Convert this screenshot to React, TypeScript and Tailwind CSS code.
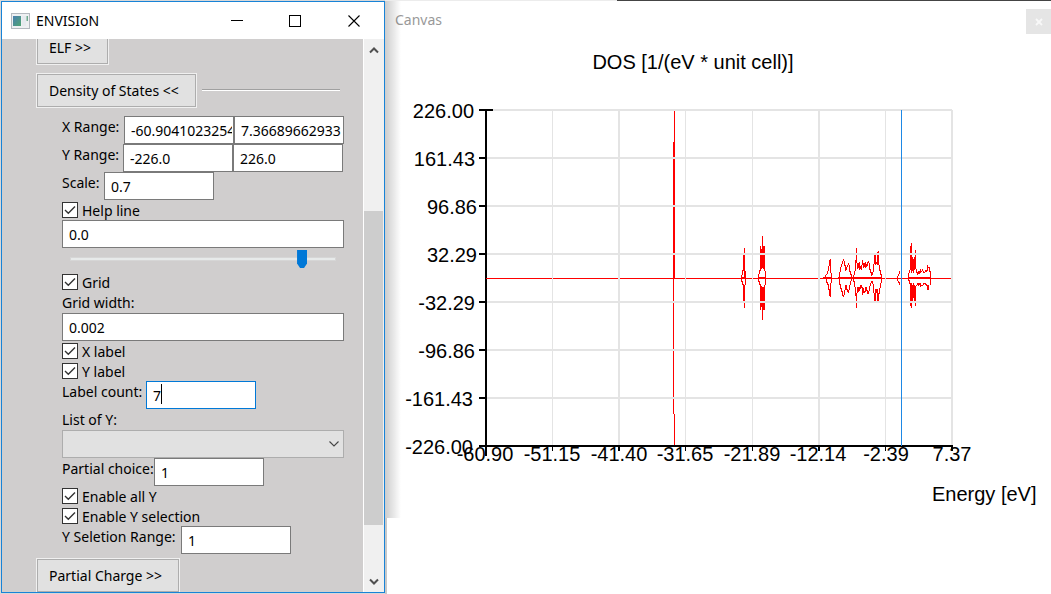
import { type ReactNode } from "react";

const GRID_Y = [110, 158, 206, 254, 302, 350, 398];
const GRID_X = [
  { x: 552, w: 1 },
  { x: 618, w: 2 },
  { x: 685, w: 1 },
  { x: 752, w: 1 },
  { x: 818, w: 2 },
  { x: 885, w: 1 },
  { x: 951, w: 2 },
];
const Y_LABELS = [
  { t: "226.00", x: 474, y: 118 },
  { t: "161.43", x: 475, y: 166 },
  { t: "96.86", x: 477, y: 214 },
  { t: "32.29", x: 477, y: 262 },
  { t: "-32.29", x: 475, y: 310 },
  { t: "-96.86", x: 475, y: 358 },
  { t: "-161.43", x: 473, y: 406 },
  { t: "-226.00", x: 473, y: 454 },
];
const X_LABELS = [
  { t: "-60.90", x: 485 },
  { t: "-51.15", x: 552 },
  { t: "-41.40", x: 619 },
  { t: "-31.65", x: 685 },
  { t: "-21.89", x: 752 },
  { t: "-12.14", x: 818 },
  { t: "-2.39", x: 886 },
  { t: "7.37", x: 952 },
];

const UPPER =
  "M64 175V166H67V153H70V106M73 84V175M73 106V153H76V175" +
  "M115 175V163H118V152H121V78M124 148V88M127 145V48M130 148V78M133 152V78M136 153V175" +
  "M310 173H316L319 163H322V154H325V139H328V127L331 118V158H334V175" +
  "M355 175H358V157H361V142H364V133H367V124H370V118L373 124V136H376V151H379V142H382V136H385V130L388 139V154H391V163H394V175" +
  "M400 175V166H403V154H406V121H409V84V121L412 132V145H415V132L418 127V148H421V139L424 151V136H427V121L430 133V142H433V130L436 127V142H439V133L442 139V127H445V124L448 133V148H451V157H454V166H457V163L460 151V133H463V103M466 136V103M466 127H469L472 136V97M475 133V94V124L478 139V151H481V163H484V175H487" +
  "M532 175L535 163H538V154H541" +
  "M565 175V166L568 154V151H571V78M574 160V69M577 154V112M580 160V118M583 151V112M586 135V90M586 130V139L589 151V157H592V163H595V154H598V160H601V148L604 154H607V148L610 157H616V151H619V154H622V136L625 142H628V154H631V175";

const LOWER =
  "M64 175V184H67V194H73M70 194V244M73 194V264M76 175V194" +
  "M115 175V184H118V193H121V270M124 199V260M127 202V300M130 202V270M133 194V270M136 194V175" +
  "M319 178V187H322V193H325V208H328V220L331 230V190H334V175" +
  "M358 175V193H361V205H364V214H367V223L370 230L373 222V211H376V196H379V208H382V214L385 218V211H388V196H391V184H394V175" +
  "M400 175V184H403V196L406 202V226H409V264V226L412 214V202H415V214H418V202L421 208V196H424V202H427V226L430 214V205L433 218L436 214V202H439V214L442 211V222H445V214L448 211V199H451V190H454V184H457L460 196V214L463 220V244M466 244V208H469V220L472 208V244M475 220V244M478 223V205H481V190H484V175" +
  "M532 175L535 187H538V193H541" +
  "M565 175V181H568V190H571V258M574 190V264M577 196V250M580 190V234M583 196V250M586 205V258M586 218V202L589 196H592V190H595V196H598V190H601V202L604 196H610V190H616V196L619 193V196H622V211L625 208V196H628L631 193V175";

function DosChart() {
  return (
    <svg
      viewBox="385 40 666 554"
      className="block h-auto w-full"
      role="img"
      aria-label="DOS chart"
      fontFamily='"Liberation Sans", Arial, sans-serif'
      fontSize={20}
      fill="#000"
    >
      <text x="693" y="69" textAnchor="middle">
        DOS [1/(eV * unit cell)]
      </text>
      <g shapeRendering="crispEdges">
        <rect x="485" y="109" width="2" height="347" />
        <rect x="479" y="109" width="14" height="2" />
        <rect x="479" y="445" width="473" height="2" />
        {GRID_Y.map((y) => (
          <rect key={y} x="479" y={y - 1} width="7" height="2" />
        ))}
        {GRID_X.map((g) => (
          <rect key={g.x} x={g.x} y="445" width={g.w} height="6" />
        ))}
        <rect x="951" y="441" width="2" height="8" />
        <rect x="486" y="278" width="465" height="1" fill="#f00" />
        <rect x="674" y="110" width="1" height="168" fill="#f00" />
        <rect x="673" y="142" width="2" height="136" fill="#f00" />
        <rect x="673" y="278" width="1" height="136" fill="#f00" />
        <rect x="674" y="414" width="1" height="31" fill="#f00" />
        <g transform="translate(720 220) scale(0.33333)" fill="none" stroke="#f00" strokeWidth="3">
          <path d={UPPER} />
          <path d={LOWER} />
          <path d="M64 172H76M115 172H136M310 172H334M355 172H487M565 172H631" />
        </g>
        {GRID_Y.map((y) => (
          <rect key={y} x={y === 110 ? 493 : 487} y={y - 1} width={y === 110 ? 459 : 465} height="2" fill="#e4e4e4" />
        ))}
        {GRID_X.map((g) => (
          <rect key={g.x} x={g.x} y="110" width={g.w} height="335" fill="#e4e4e4" />
        ))}
        <rect x="901" y="110" width="1" height="336" fill="#1e88e5" />
      </g>
      {Y_LABELS.map((l) => (
        <text key={l.t} x={l.x} y={l.y} textAnchor="end">
          {l.t}
        </text>
      ))}
      {X_LABELS.map((l) => (
        <text key={l.t} x={l.x} y="461" textAnchor="middle">
          {l.t}
        </text>
      ))}
      <text x="932" y="501">
        Energy [eV]
      </text>
    </svg>
  );
}

const FIELD = "h-[28px] border bg-white pr-px pl-[6px] text-[14px] text-black outline-none";

interface FieldProps {
  id: string;
  label: string;
  labelClass: string;
  values: string[];
  active?: boolean;
}

function Field({ id, label, labelClass, values, active }: FieldProps) {
  return (
    <div className="flex h-[28px]">
      <label htmlFor={id} className={`shrink-0 leading-[21px] whitespace-nowrap ${labelClass}`}>
        {label}
      </label>
      {values.map((v, i) => (
        <div key={v} className="relative w-[110px] shrink-0">
          <input
            id={i === 0 ? id : undefined}
            aria-label={i === 0 ? undefined : `${label} upper`}
            defaultValue={v}
            className={active ? `${FIELD} w-full border-[#0078d7]` : `${FIELD} w-full border-[#7a7a7a]`}
          />
          {active && <span className="absolute top-[3px] left-[15px] h-[20px] w-px bg-black" />}
        </div>
      ))}
    </div>
  );
}

function WideField({ id, label, value }: { id: string; label?: string; value: string }) {
  return <input id={id} aria-label={label} defaultValue={value} className={`${FIELD} block w-full border-[#7a7a7a]`} />;
}

function Check({ label }: { label: string }) {
  return (
    <label className="flex h-[20px] items-start gap-[4px] leading-[22px]">
      <span className="mt-[2px] grid size-[16px] place-items-center">
        <input
          type="checkbox"
          defaultChecked
          className="peer col-start-1 row-start-1 size-[16px] appearance-none border border-[#333] bg-white"
        />
        <svg viewBox="0 0 16 16" className="pointer-events-none col-start-1 row-start-1 hidden size-[16px] peer-checked:block">
          <path d="M3 8L6.3 11.2L13 4.6" fill="none" stroke="#333" strokeWidth="1.4" />
        </svg>
      </span>
      {label}
    </label>
  );
}

function PanelButton({ children }: { children: ReactNode }) {
  return (
    <button type="button" className="h-[35px] shrink-0 border border-[#f0f0f0] bg-[#e1e1e1] whitespace-nowrap">
      <span className="flex h-full items-center border border-[#adadad] pr-[16px] pl-[11px]">{children}</span>
    </button>
  );
}

function Chevron({ up }: { up?: boolean }) {
  return (
    <svg viewBox="0 0 10 8" className="h-[8px] w-[10px]">
      <path d={up ? "M1 6.5L5 2.5L9 6.5" : "M1 1.5L5 5.5L9 1.5"} fill="none" stroke="#505050" strokeWidth="2" />
    </svg>
  );
}

function ControlWindow() {
  return (
    <section className="mt-px ml-px flex h-[592px] w-[384px] shrink-0 flex-col border border-[#1883d7] bg-[#d0cece] text-[14px] text-black">
      <header className="flex h-[37px] shrink-0 items-center bg-white">
        <svg viewBox="0 0 19 16" className="ml-[9px] h-[16px] w-[19px]">
          <defs>
            <linearGradient id="app" x1="0" y1="0" x2="1" y2="1">
              <stop offset="0" stopColor="#4a7fb0" />
              <stop offset="1" stopColor="#4fa572" />
            </linearGradient>
          </defs>
          <rect x="0.5" y="0.5" width="18" height="15" fill="#eef0f2" stroke="#b4b9bf" />
          <rect x="2" y="3" width="8" height="10" fill="url(#app)" />
          <rect x="11" y="3" width="4" height="10" fill="#e6eaee" />
          <rect x="15.5" y="3" width="1.5" height="5" fill="#6fa98d" />
        </svg>
        <h1 className="ml-[6px] flex-1">ENVISIoN</h1>
        <div className="flex text-black">
          <button type="button" aria-label="Minimize" className="grid h-[37px] w-[58px] place-items-center">
            <svg viewBox="0 0 12 12" className="size-[12px]" shapeRendering="crispEdges">
              <rect x="0" y="5" width="12" height="1" />
            </svg>
          </button>
          <button type="button" aria-label="Maximize" className="grid h-[37px] w-[58px] place-items-center">
            <svg viewBox="0 0 12 12" className="size-[12px]">
              <rect x="0.5" y="0.5" width="11" height="11" fill="none" stroke="#000" />
            </svg>
          </button>
          <button type="button" aria-label="Close" className="grid h-[37px] w-[60px] place-items-center">
            <svg viewBox="0 0 12 12" className="size-[12px]">
              <path d="M0.5 0.5L11.5 11.5M11.5 0.5L0.5 11.5" fill="none" stroke="#000" strokeWidth="1.1" />
            </svg>
          </button>
        </div>
      </header>
      <div className="flex min-h-0 flex-1">
        <div className="flex min-w-0 flex-1 flex-col overflow-hidden pl-[34px]">
          <div className="flex h-[26px] shrink-0 flex-col items-start justify-end">
            <PanelButton>ELF &gt;&gt;</PanelButton>
          </div>
          <div className="mt-[8px] flex shrink-0">
            <PanelButton>Density of States &lt;&lt;</PanelButton>
            <div className="mt-[16px] mr-[23px] ml-[5px] h-[2px] flex-1 border-t border-[#a0a0a0] bg-white" />
          </div>
          <div className="mt-[8px] mr-[19px] ml-[26px] flex flex-col">
            <Field id="x-range" label="X Range:" labelClass="w-[62px]" values={["-60.9041023254", "7.36689662933"]} />
            <Field id="y-range" label="Y Range:" labelClass="w-[61px]" values={["-226.0", "226.0"]} />
            <Field id="scale" label="Scale:" labelClass="w-[42px]" values={["0.7"]} />
            <Check label="Help line" />
            <WideField id="help-line" label="Help line position" value="0.0" />
            <div className="flex h-[24px] items-start px-[8px]">
              <input
                type="range"
                aria-label="Help line position slider"
                min={0}
                max={100}
                defaultValue={89}
                className="mt-px h-[20px] w-full appearance-none bg-transparent [&::-webkit-slider-runnable-track]:h-[4px] [&::-webkit-slider-runnable-track]:border [&::-webkit-slider-runnable-track]:border-[#d6d6d6] [&::-webkit-slider-runnable-track]:bg-[#e7eaea] [&::-webkit-slider-thumb]:-mt-[8px] [&::-webkit-slider-thumb]:h-[18px] [&::-webkit-slider-thumb]:w-[10px] [&::-webkit-slider-thumb]:appearance-none [&::-webkit-slider-thumb]:bg-[#0078d7] [&::-webkit-slider-thumb]:[clip-path:polygon(0_0,100%_0,100%_75%,70%_100%,30%_100%,0_75%)]"
              />
            </div>
            <Check label="Grid" />
            <label htmlFor="grid-width" className="h-[21px] leading-[21px]">
              Grid width:
            </label>
            <WideField id="grid-width" value="0.002" />
            <Check label="X label" />
            <Check label="Y label" />
            <Field id="label-count" label="Label count:" labelClass="w-[84px]" values={["7"]} active />
            <label htmlFor="y-list" className="h-[21px] leading-[21px]">
              List of Y:
            </label>
            <div className="grid">
              <select id="y-list" className="col-start-1 row-start-1 h-[28px] w-full appearance-none border border-[#adadad] bg-[#e1e1e1]" />
              <svg viewBox="0 0 10 6" className="pointer-events-none col-start-1 row-start-1 mr-[5px] h-[6px] w-[10px] self-center justify-self-end">
                <path d="M0.5 0.5L5 5L9.5 0.5" fill="none" stroke="#444" strokeWidth="1.1" />
              </svg>
            </div>
            <Field id="partial" label="Partial choice:" labelClass="w-[92px]" values={["1"]} />
            <Check label="Enable all Y" />
            <Check label="Enable Y selection" />
            <Field id="selection" label="Y Seletion Range:" labelClass="w-[119px]" values={["1"]} />
          </div>
          <div className="mt-[4px] flex shrink-0">
            <PanelButton>Partial Charge &gt;&gt;</PanelButton>
          </div>
        </div>
        <div className="flex w-[21px] shrink-0 flex-col border-l border-white bg-[#f0f0f0]">
          <div className="grid h-[21px] place-items-center">
            <Chevron up />
          </div>
          <div className="mt-[151px] mr-px h-[314px] bg-[#cdcdcd]" />
          <div className="mt-auto grid h-[21px] place-items-center">
            <Chevron />
          </div>
        </div>
      </div>
    </section>
  );
}

export default function App() {
  return (
    <main className="flex items-start overflow-hidden bg-[#d8d8d8] font-['Noto_Sans',sans-serif]">
      <ControlWindow />
      <section className="relative min-w-0 flex-1 bg-white">
        <div className="flex h-px">
          <div className="w-[232px] bg-[#ececec]" />
          <div className="flex-1 bg-[#444]" />
        </div>
        <header className="flex h-[39px] items-start justify-between pt-[8px] pl-[10px]">
          <h2 className="text-[14px] leading-[22px] text-[#999]">Canvas</h2>
          <button type="button" aria-label="Close canvas" className="grid size-[25px] place-items-center bg-[#e5e5e5]">
            <svg viewBox="0 0 8 8" className="size-[8px]">
              <path d="M1 1L7 7M7 1L1 7" stroke="#f8f8f8" strokeWidth="1.8" />
            </svg>
          </button>
        </header>
        <DosChart />
        <div className="pointer-events-none absolute top-px left-0 h-[517px] w-[16px] bg-linear-to-r from-black/20 to-transparent" />
        <div className="pointer-events-none absolute top-[518px] bottom-0 left-0 w-[2px] bg-[#c8c8c8]" />
      </section>
    </main>
  );
}
